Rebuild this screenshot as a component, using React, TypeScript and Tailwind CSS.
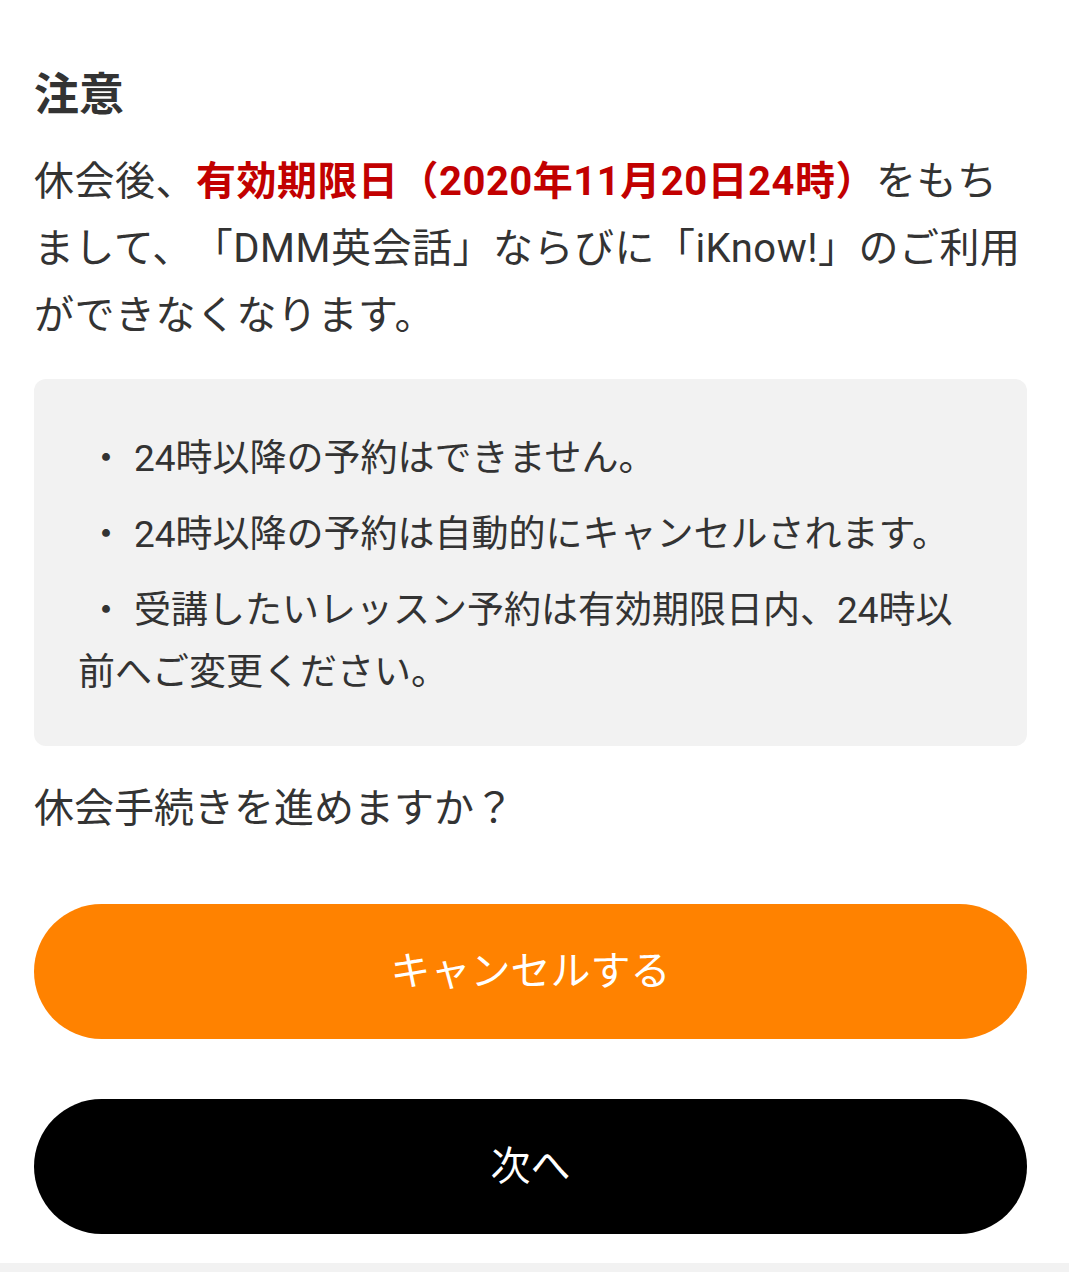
import React from 'react'

const notes = [
  '24時以降の予約はできません。',
  '24時以降の予約は自動的にキャンセルされます。',
  '受講したいレッスン予約は有効期限日内、24時以前へご変更ください。',
]

export default function App() {
  return (
    <div className="min-h-screen bg-white font-['Roboto','Noto_Sans_CJK_JP',sans-serif] text-[#333] [text-spacing-trim:space-all]">
      <div className="pl-[34px] pr-[42px] pt-[66px]">
        <h1 className="text-[45px] font-bold leading-[60px]">注意</h1>

        <p className="mt-[22px] text-[40px] leading-[67px] tracking-[0.5px]">
          休会後、
          <span className="font-bold text-[#c20000]">有効期限日（2020年11月20日24時）</span>
          をもちまして、「DMM英会話」ならびに「iKnow!」のご利用ができなくなります。
        </p>

        <div className="mt-[30px] rounded-[12px] bg-[#f2f2f2] pb-[42px] pl-[44px] pr-[44px] pt-[49px] text-[37px] leading-[62px]">
          {notes.map((note, i) => (
            <p key={i} className={i > 0 ? 'mt-[14px]' : ''}>
              <span className="inline-block w-[56px] text-center">・</span>
              {note}
            </p>
          ))}
        </div>

        <p className="mt-[29px] text-[40px] leading-[67px]">休会手続きを進めますか？</p>

        <div className="mt-[62px] flex flex-col gap-[60px]">
          <button className="flex h-[135px] w-full items-center justify-center rounded-full bg-[#ff8200] text-[40px] text-white">
            キャンセルする
          </button>
          <button className="flex h-[135px] w-full items-center justify-center rounded-full bg-black text-[40px] text-white">
            次へ
          </button>
        </div>
      </div>
      <div className="mt-[29px] h-[40px] bg-[#f2f2f2]" />
    </div>
  )
}
